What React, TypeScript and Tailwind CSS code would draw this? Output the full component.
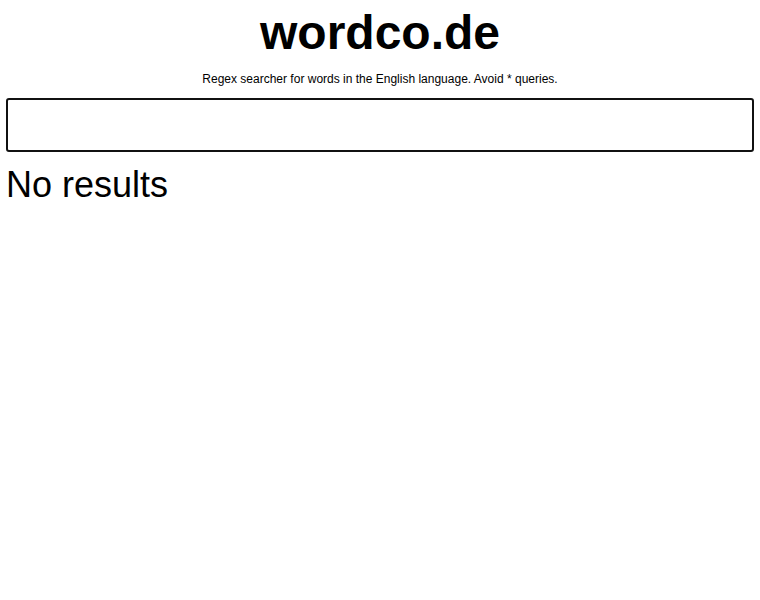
import React, { useState } from 'react';

const App: React.FC = () => {
  const [query, setQuery] = useState('');

  return (
    <div className="min-h-screen bg-white px-[6px] text-black" style={{ fontFamily: '"Liberation Sans", Arial, sans-serif' }}>
      <h1 className="pt-[4px] text-center text-[48px] font-bold leading-[58px]">wordco.de</h1>
      <p className="mt-[9px] text-center text-[12px] leading-[16px]">
        Regex searcher for words in the English language. Avoid * queries.
      </p>
      <input
        value={query}
        onChange={e => setQuery(e.target.value)}
        className="mt-[11px] block h-[54px] w-full rounded-[3px] border-2 border-[#111] px-2 text-[20px] outline-none"
      />
      <div className="mt-[12px] text-[36px] leading-[42px]">No results</div>
    </div>
  );
};

export default App;
